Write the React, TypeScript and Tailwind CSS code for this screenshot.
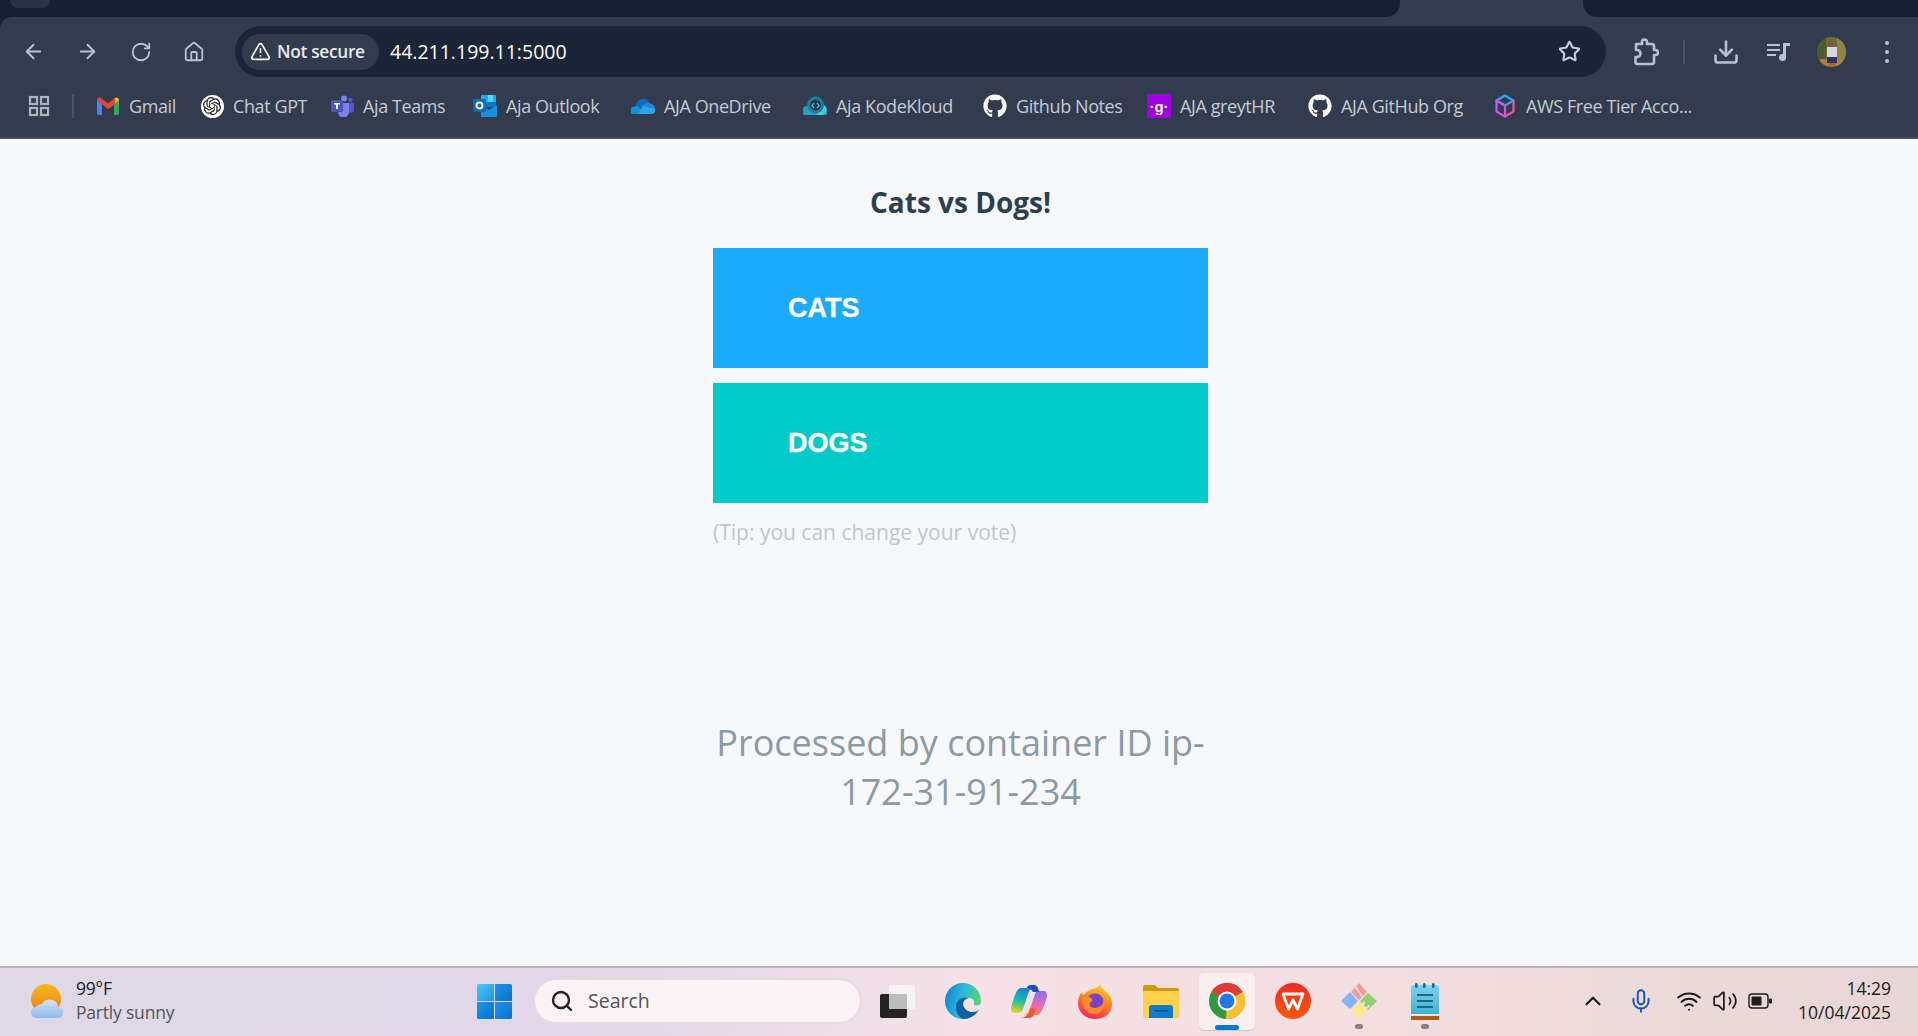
import { ArrowLeft, ArrowRight, ChevronUp, Download, Home, Mic, RotateCw, Search, Star, TriangleAlert, Volume2, Wifi } from "lucide-react";
import { FaGithub } from "react-icons/fa";
import { SiOpenai } from "react-icons/si";
import type { ReactNode } from "react";

const ui = "font-['Open_Sans','Noto_Sans',sans-serif]";

function GridIcon() {
  return (
    <svg width="22" height="22" viewBox="0 0 22 22" fill="none" stroke="#aeb4bf" strokeWidth="2.2">
      <rect x="2" y="2" width="7" height="7" />
      <rect x="13" y="2" width="7" height="7" />
      <rect x="2" y="13" width="7" height="7" />
      <rect x="13" y="13" width="7" height="7" />
    </svg>
  );
}

function GmailIcon() {
  return (
    <svg width="22" height="18" viewBox="0 0 22 18" fill="none">
      <path d="M0 3v13a2 2 0 0 0 2 2h3V7z" fill="#4285f4" />
      <path d="M22 3v13a2 2 0 0 1-2 2h-3V7z" fill="#34a853" />
      <path d="M17 1v6l5-3.5V3a2.5 2.5 0 0 0-4-2z" fill="#fbbc04" />
      <path d="M5 7 0 3.5V3a2.5 2.5 0 0 1 4-2l7 5.4L18 1v6l-7 5.2z" fill="#ea4335" />
    </svg>
  );
}

function ChatGptIcon() {
  return (
    <div className="flex h-[23px] w-[23px] items-center justify-center rounded-full bg-white">
      <SiOpenai className="text-[18px] text-[#222]" />
    </div>
  );
}

function TeamsIcon() {
  return (
    <svg width="23" height="22" viewBox="0 0 23 22">
      <circle cx="13" cy="3.500" r="3" fill="#7b83eb" />
      <circle cx="19.500" cy="5" r="2.200" fill="#5059c9" />
      <path d="M16 8h7v6a3.500 3.500 0 0 1-7 1z" fill="#5059c9" />
      <path d="M7 8h11v9a5.500 5.500 0 0 1-11 0z" fill="#7b83eb" />
      <rect x="0" y="5" width="12" height="12" rx="1.200" fill="#4b53bc" />
      <path d="M3 8h6v1.600H6.900V14H5.100V9.600H3z" fill="#fff" />
    </svg>
  );
}

function OutlookIcon() {
  return (
    <svg width="24" height="22" viewBox="0 0 24 22">
      <path d="M8 0h15v7H8z" fill="#28a8ea" />
      <path d="M15 0h5v7h-5z" fill="#50d9ff" />
      <path d="M8 7h15v5H8z" fill="#0078d4" />
      <path d="M8 11l8 4 8-5v11a1 1 0 0 1-1 1H8z" fill="#1490df" />
      <rect x="0" y="4" width="13" height="13" rx="1" fill="#0f6cbd" />
      <circle cx="6.500" cy="10.500" r="3" fill="none" stroke="#fff" strokeWidth="1.800" />
    </svg>
  );
}

function OneDriveIcon() {
  return (
    <svg width="24" height="15" viewBox="0 0 24 15">
      <path d="M5 7a7 7 0 0 1 13.500-2.500L22 8H4z" fill="#0f6cbd" />
      <path d="M3 15a3.500 3.500 0 0 1-1-7l3-1 6 2-3 6z" fill="#1490df" />
      <path d="M11 7a7 7 0 0 1 8-2.500A5 5 0 0 1 24 10l-12 1z" fill="#1c88dc" />
      <path d="M7 15h13.500a3.500 3.500 0 0 0 3.500-5L12 7z" fill="#28a8ea" />
    </svg>
  );
}

function KodeKloudIcon() {
  return (
    <svg width="24" height="20" viewBox="0 0 24 20">
      <path d="M1 19a5 5 0 0 1 3-9h16a5 5 0 0 1 3 9z" fill="#1fa3c4" />
      <path d="M18 8a5 5 0 0 1 5 6 5 5 0 0 1-4 5h-5z" fill="#42d0e0" />
      <circle cx="12.500" cy="9" r="8.500" fill="#1d7f99" />
      <circle cx="12.500" cy="9" r="5.500" fill="#123f52" />
      <path d="M11 7 9 9.500l2 2.500M14 7l2 2.500-2 2.500" fill="none" stroke="#7fd7e6" strokeWidth="1.100" />
    </svg>
  );
}

function GithubIcon() {
  return <FaGithub className="text-[24px] text-white" />;
}

function GreytIcon() {
  return (
    <div className="flex h-[24px] w-[24px] items-center justify-center bg-[#a100e0] font-['Liberation_Sans',sans-serif] text-[15px] leading-none font-bold text-white">
      ·g·
    </div>
  );
}

function AwsIcon() {
  return (
    <svg width="20" height="24" viewBox="0 0 20 24" fill="none" strokeWidth="2.2" strokeLinejoin="round">
      <path d="M10 1.500 18.500 6.500 10 11.500 1.500 6.500z" stroke="#2ea6f5" />
      <path d="M1.500 6.500v11L10 22.500v-11z" stroke="#c45bea" />
      <path d="M18.500 6.500v11L10 22.500" stroke="#f0568f" />
    </svg>
  );
}

function ExtensionIcon() {
  return (
    <svg width="26" height="28" viewBox="0 0 26 28" fill="none" stroke="#b9c1d2" strokeWidth="2.600" strokeLinejoin="round">
      <path d="M3 6h6V4a2.500 2.500 0 0 1 5 0v2h5a2 2 0 0 1 2 2v4h1.500a2.500 2.500 0 0 1 0 5H21v7a2 2 0 0 1-2 2H4.500a2 2 0 0 1-2-2v-5h1.500a3.500 3.500 0 0 0 0-7H3z" />
    </svg>
  );
}

function MediaIcon() {
  return (
    <svg width="24" height="22" viewBox="0 0 24 22" fill="#b9c1d2">
      <rect x="0" y="3" width="13" height="2" />
      <rect x="0" y="8" width="13" height="2" />
      <rect x="0" y="13" width="9" height="2" />
      <path d="M16 2h7v3h-4v11.500a3.500 3.500 0 1 1-3-3.400z" />
    </svg>
  );
}

function Avatar() {
  return (
    <svg width="29" height="30" viewBox="0 0 29 30">
      <defs>
        <clipPath id="avatarClip">
          <ellipse cx="14.500" cy="15" rx="14.500" ry="15" />
        </clipPath>
      </defs>
      <g clipPath="url(#avatarClip)">
        <rect width="29" height="30" fill="#6f6a3a" />
        <rect x="0" y="0" width="9" height="30" fill="#4e5a2c" />
        <rect x="20" y="0" width="9" height="30" fill="#8d8640" />
        <rect x="3" y="22" width="23" height="8" fill="#a8803f" />
        <circle cx="14" cy="7" r="3" fill="#7a5a45" />
        <rect x="10" y="10" width="10" height="10" fill="#d8d6de" />
        <rect x="10" y="20" width="10" height="6" fill="#2c3470" />
        <rect x="12" y="26" width="6" height="3" fill="#c45a2a" />
      </g>
    </svg>
  );
}

function WeatherIcon() {
  return (
    <svg width="32" height="34" viewBox="0 0 32 34">
      <defs>
        <linearGradient id="sun" x1="0" y1="0" x2="0" y2="1">
          <stop offset="0" stopColor="#f6b91f" />
          <stop offset="1" stopColor="#ee7a10" />
        </linearGradient>
        <linearGradient id="cloud" x1="0" y1="0" x2="0" y2="1">
          <stop offset="0" stopColor="#d4e3f7" />
          <stop offset="1" stopColor="#8fb8ec" />
        </linearGradient>
      </defs>
      <ellipse cx="15" cy="15" rx="15" ry="15" fill="url(#sun)" />
      <path d="M6 34a5.500 5.500 0 0 1-1-11 7 7 0 0 1 6-3 8 8 0 0 1 10-4 7 7 0 0 1 6 7 5.500 5.500 0 0 1 0 11z" fill="url(#cloud)" />
    </svg>
  );
}

function WindowsLogo() {
  return (
    <svg width="35" height="35" viewBox="0 0 35 35">
      <defs>
        <linearGradient id="winA" x1="0" y1="0" x2="1" y2="1">
          <stop offset="0" stopColor="#4cc9fb" />
          <stop offset="1" stopColor="#1a94e4" />
        </linearGradient>
        <linearGradient id="winB" x1="0" y1="0" x2="1" y2="1">
          <stop offset="0" stopColor="#1a94e4" />
          <stop offset="1" stopColor="#0673d0" />
        </linearGradient>
      </defs>
      <path d="M0 1.500A1.500 1.500 0 0 1 1.500 0H17v17H0z" fill="url(#winA)" />
      <path d="M18 0h15.500A1.500 1.500 0 0 1 35 1.500V17H18z" fill="url(#winB)" />
      <path d="M0 18h17v17H1.500A1.500 1.500 0 0 1 0 33.500z" fill="url(#winB)" />
      <path d="M18 18h17v15.500a1.500 1.500 0 0 1-1.500 1.500H18z" fill="url(#winB)" />
    </svg>
  );
}

function TaskViewIcon() {
  return (
    <svg width="35" height="33" viewBox="0 0 35 33">
      <rect x="0" y="9" width="27" height="24" rx="2" fill="#242424" />
      <rect x="9" y="0" width="26" height="24" rx="1.500" fill="#f5f3f3" />
      <rect x="9" y="9" width="18" height="15" rx="1" fill="#bdbcbc" />
    </svg>
  );
}

function EdgeIcon() {
  return (
    <svg width="36" height="36" viewBox="0 0 36 36">
      <defs>
        <linearGradient id="edgeA" x1="0" y1="0.300" x2="1" y2="0.500">
          <stop offset="0" stopColor="#1583d8" />
          <stop offset="0.500" stopColor="#2bbcd8" />
          <stop offset="1" stopColor="#5ad66b" />
        </linearGradient>
      </defs>
      <circle cx="18" cy="18" r="18" fill="url(#edgeA)" />
      <path d="M11 24C11 16 18 13 24 15 19 16 17 20 19 24 22 30 30 30 34 27 30 33 24 36 18 36 13 34 11 29 11 24z" fill="#0d5fa8" />
      <path d="M24 15C28 15 30 18 29 20 28 22 30 24 36 21 36 24 35 26 34 27 30 30 22 30 19 24 17 20 19 16 24 15z" fill="#f7e2e6" />
    </svg>
  );
}

function CopilotIcon() {
  return (
    <svg width="36" height="33" viewBox="0 0 36 33">
      <defs>
        <linearGradient id="copA" x1="0.400" y1="0" x2="0.200" y2="1">
          <stop offset="0" stopColor="#1b7fe0" />
          <stop offset="0.500" stopColor="#1ec0a0" />
          <stop offset="1" stopColor="#f5d020" />
        </linearGradient>
        <linearGradient id="copB" x1="0.500" y1="0" x2="0.400" y2="1">
          <stop offset="0" stopColor="#8a6df0" />
          <stop offset="0.600" stopColor="#e86bb8" />
          <stop offset="1" stopColor="#f58a4a" />
        </linearGradient>
      </defs>
      <path d="M10 3h12c-3 1-4 3-5 6l-5 15c-1 3-3 4-6 4H4c-3 0-4-2-4-5 1-5 3-11 5-15 1-3 3-5 5-5z" fill="url(#copA)" />
      <path d="M26 30H14c3-1 4-3 5-6l5-15c1-3 3-3 6-3h2c3 0 4 2 4 5-1 5-3 10-5 14-1 3-3 5-5 5z" fill="url(#copB)" />
      <path d="M16 3c0-2 2-3 4-3h3c3 0 4 2 5 7h-6c-2-3-4-4-6-4z" fill="#1752c4" />
      <path d="M10 33c3 0 5-2 7-4 1-2 1-3 2-6l6 1-2 5c-1 3-3 4-5 4z" fill="#f0573c" />
    </svg>
  );
}

function FirefoxIcon() {
  return (
    <svg width="34" height="35" viewBox="0 0 34 35">
      <defs>
        <linearGradient id="ffA" x1="0.700" y1="0" x2="0.300" y2="1">
          <stop offset="0" stopColor="#ffd31f" />
          <stop offset="0.500" stopColor="#ff7a1f" />
          <stop offset="1" stopColor="#f0245f" />
        </linearGradient>
      </defs>
      <path d="M17 35C7 35 0 28 0 19c0-4 1-8 4-11 0 2 1 3 2 3 2-3 5-5 8-6 5-1 8-3 8-5 1 3 2 4 6 8 4 3 6 7 6 12 0 9-7 15-17 15z" fill="url(#ffA)" />
      <circle cx="17" cy="18" r="8.500" fill="#7542c8" />
      <path d="M3 14c3-2 8-2 10 0 2 1 2 3 0 4-3 2-1 6 4 6 5 0 9-4 9-9 2 7-2 15-9 15-7 0-13-6-14-16z" fill="#ff8a2a" />
    </svg>
  );
}

function FolderIcon() {
  return (
    <svg width="36" height="33" viewBox="0 0 36 33">
      <path d="M0 2a2 2 0 0 1 2-2h10l3 3h19a2 2 0 0 1 2 2v3H0z" fill="#cf9a06" />
      <path d="M0 6h36v25a2 2 0 0 1-2 2H2a2 2 0 0 1-2-2z" fill="#fdd14a" />
      <path d="M6 33V23a3 3 0 0 1 3-3h18a3 3 0 0 1 3 3v10z" fill="#0f7cc8" />
      <rect x="12" y="25" width="13" height="1.600" fill="#0b4f85" />
    </svg>
  );
}

function ChromeIcon() {
  return (
    <svg width="36" height="36" viewBox="0 0 36 36">
      <circle cx="18" cy="18" r="18" fill="#2e9b43" />
      <path d="M18 18 2.400 9A18 18 0 0 1 33.600 9z" fill="#e53935" />
      <path d="M18 18 33.600 9A18 18 0 0 1 17 36z" fill="#fbc02d" />
      <circle cx="18" cy="18" r="9.500" fill="#fff" />
      <circle cx="18" cy="18" r="7.500" fill="#2a75e6" />
    </svg>
  );
}

function WpsIcon() {
  return (
    <svg width="36" height="36" viewBox="0 0 36 36">
      <defs>
        <linearGradient id="wps" x1="0" y1="0" x2="0" y2="1">
          <stop offset="0" stopColor="#ee2a1e" />
          <stop offset="1" stopColor="#ff5a0a" />
        </linearGradient>
      </defs>
      <circle cx="18" cy="18" r="18" fill="url(#wps)" />
      <path d="M8 11h20l-5.500 15-4.500-9-4.500 9z" fill="none" stroke="#fff" strokeWidth="2.800" strokeLinejoin="round" />
    </svg>
  );
}

function PaletteIcon() {
  return (
    <svg width="36" height="36" viewBox="0 0 36 36">
      <path d="M18 17 10 9l8-9 8 9z" fill="#f49a9a" />
      <path d="M19 18l8-8 9 8-9 9z" fill="#8ed36f" />
      <path d="M18 19l8 8-8 9-8-9z" fill="#fde98a" />
      <path d="M17 18l-8 8-9-8 9-9z" fill="#86b4f8" />
      <path d="M14 3l8 12M24 19a3 3 0 1 0 4 3" stroke="#f4dede" strokeWidth="1.800" fill="none" />
    </svg>
  );
}

function NotepadIcon() {
  return (
    <svg width="28" height="37" viewBox="0 0 28 37">
      <defs>
        <linearGradient id="note" x1="0" y1="0" x2="0" y2="1">
          <stop offset="0" stopColor="#7ad3ef" />
          <stop offset="1" stopColor="#3eaed0" />
        </linearGradient>
      </defs>
      <rect x="0" y="2" width="28" height="31" rx="2" fill="url(#note)" />
      <path d="M0 33h28v4H0z" fill="#b55a10" />
      <path d="M0 31h28v2H0z" fill="#e9e4df" />
      <rect x="4" y="0" width="2.500" height="5" rx="1.200" fill="#1b6b88" />
      <rect x="12" y="0" width="2.500" height="5" rx="1.200" fill="#1b6b88" />
      <rect x="21" y="0" width="2.500" height="5" rx="1.200" fill="#1b6b88" />
      <rect x="6" y="11" width="16" height="2" fill="#1b6b88" />
      <rect x="6" y="17" width="16" height="2" fill="#1b6b88" />
      <rect x="6" y="23" width="16" height="2" fill="#1b6b88" />
    </svg>
  );
}

function BatteryIcon() {
  return (
    <svg width="24" height="16" viewBox="0 0 24 16" fill="none">
      <rect x="1" y="1" width="19" height="14" rx="3" stroke="#1c1c1c" strokeWidth="1.400" />
      <rect x="3.500" y="3.500" width="10" height="9" rx="1" fill="#1c1c1c" />
      <rect x="21" y="5.500" width="3" height="5" rx="1" fill="#1c1c1c" />
    </svg>
  );
}

const bookmarks: { label: string; icon: ReactNode; width: string }[] = [
  { label: "Gmail", icon: <GmailIcon />, width: "w-[104px]" },
  { label: "Chat GPT", icon: <ChatGptIcon />, width: "w-[130px]" },
  { label: "Aja Teams", icon: <TeamsIcon />, width: "w-[143px]" },
  { label: "Aja Outlook", icon: <OutlookIcon />, width: "w-[158px]" },
  { label: "AJA OneDrive", icon: <OneDriveIcon />, width: "w-[172px]" },
  { label: "Aja KodeKloud", icon: <KodeKloudIcon />, width: "w-[180px]" },
  { label: "Github Notes", icon: <GithubIcon />, width: "w-[164px]" },
  { label: "AJA greytHR", icon: <GreytIcon />, width: "w-[161px]" },
  { label: "AJA GitHub Org", icon: <GithubIcon />, width: "w-[185px]" },
  { label: "AWS Free Tier Acco...", icon: <AwsIcon />, width: "w-[200px]" },
];

function TabStrip() {
  return (
    <div className="flex h-[17px] bg-[#333c4e]">
      <div className="flex-1 rounded-br-[14px] bg-[#172033] pl-[10px]">
        <div className="h-[8px] w-[40px] rounded-b-[10px] bg-[#2a3346]" />
      </div>
      <div className="w-[183px]" />
      <div className="w-[335px] rounded-bl-[14px] bg-[#172033]" />
    </div>
  );
}

function Toolbar() {
  return (
    <div className="bg-[#172033]">
      <div className="flex h-[60px] items-start rounded-tl-[12px] bg-[#333c4e] pt-[9px] pr-[20px] pl-[22px]">
        <div className="flex h-[51px] items-center gap-[31px] text-[#b9c1d2]">
          <ArrowLeft size={23} strokeWidth={2} />
          <ArrowRight size={23} strokeWidth={2} />
          <RotateCw size={22} strokeWidth={2} />
          <Home size={22} strokeWidth={2} />
        </div>
        <div className="ml-[30px] flex h-[51px] w-[1371px] items-center rounded-full bg-[#1c2538] pr-[14px] pl-[7px]">
          <div className="flex h-[36px] w-[137px] items-center gap-[6px] rounded-full bg-[#333c4e] pl-[8px]">
            <TriangleAlert size={21} strokeWidth={1.8} className="text-white" />
            <span className="text-[17.300px] font-semibold tracking-[-0.3px] whitespace-nowrap text-[#e6e9ef]">Not secure</span>
          </div>
          <span className="ml-[11px] text-[19.500px] text-white">44.211.199.11:5000</span>
          <Star size={23} strokeWidth={2.2} className="mr-[11px] ml-auto text-[#c8cedb]" />
        </div>
        <div className="flex h-[51px] flex-1 items-center pl-[27px] text-[#b9c1d2]">
          <ExtensionIcon />
          <div className="mx-[24px] h-[24px] w-[2px] bg-[#4c5568]" />
          <div className="ml-[3px]">
            <Download size={28} strokeWidth={2.2} />
          </div>
          <div className="ml-[27px]">
            <MediaIcon />
          </div>
          <div className="ml-[26px]">
            <Avatar />
          </div>
          <div className="mr-[9px] ml-auto flex flex-col gap-[5px]">
            <span className="h-[4px] w-[4px] rounded-full bg-[#b9c1d2]" />
            <span className="h-[4px] w-[4px] rounded-full bg-[#b9c1d2]" />
            <span className="h-[4px] w-[4px] rounded-full bg-[#b9c1d2]" />
          </div>
        </div>
      </div>
    </div>
  );
}

function BookmarksBar() {
  return (
    <div className="flex h-[62px] items-center border-b-2 border-[#454d5d] bg-[#333c4e] pb-[2px] pl-[28px]">
      <GridIcon />
      <div className="mx-[22px] h-[24px] w-[2px] bg-[#4c5568]" />
      <div className="flex items-center">
        {bookmarks.map((b) => (
          <div key={b.label} className={`flex shrink-0 items-center gap-[9px] ${b.width}`}>
            <div className="flex w-[24px] items-center justify-center">{b.icon}</div>
            <span className="text-[18px] tracking-[-0.4px] whitespace-nowrap text-[#c5cad5]">{b.label}</span>
          </div>
        ))}
      </div>
    </div>
  );
}

function VotePage() {
  return (
    <main className="flex flex-1 flex-col items-center bg-[#f7f8fa] pt-[45px] pl-[3px]">
      <h1 className="text-[28px] leading-[36px] font-bold text-[#2c3e50]">Cats vs Dogs!</h1>
      <div className="mt-[28px] flex w-[495px] flex-col gap-[15px] font-['Liberation_Sans',sans-serif] text-[27px] font-bold text-white [-webkit-text-stroke:0.3px_white]">
        <button className="flex h-[120px] items-center bg-[#1aabfb] pl-[75px]">CATS</button>
        <button className="flex h-[120px] items-center bg-[#00cbca] pl-[75px]">DOGS</button>
      </div>
      <p className="mt-[15px] w-[495px] text-[21px] leading-[28px] text-[#bec6cd]">(Tip: you can change your vote)</p>
      <p className="mt-[172px] w-[495px] text-center text-[36px] leading-[49px] text-[#8b9aa5]">
        Processed by container ID ip-172-31-91-234
      </p>
    </main>
  );
}

function TaskbarApp({ children, active, running }: { children: ReactNode; active?: boolean; running?: boolean }) {
  return (
    <div className="relative flex h-[57px] w-[66px] items-center justify-center">
      {active && <div className="absolute inset-y-0 left-[5px] w-[56px] rounded-[5px] bg-[#faeeee] shadow-[0_1px_1px_#d8c4c8]" />}
      <div className="relative">{children}</div>
      {active && <div className="absolute bottom-0 h-[5px] w-[24px] rounded-full bg-[#0078d4]" />}
      {running && <div className="absolute bottom-[1px] h-[5px] w-[8px] rounded-full bg-[#8a7f82]" />}
    </div>
  );
}

function Taskbar() {
  return (
    <footer className="flex h-[70px] items-center border-t-2 border-[#bcb4bc] bg-[linear-gradient(90deg,#dfd8e6_0%,#e0d8e8_30%,#f5e1e7_50%,#f3dfe0_70%,#e8d5d6_100%)] pb-[2px] text-[#1c1c1c]">
      <div className="flex w-[477px] items-center pl-[31px]">
        <WeatherIcon />
        <div className="ml-[13px] text-[17.500px] leading-[24px] tracking-[-0.2px]">
          <div className="-mt-[2px]">99°F</div>
          <div className="text-[#555]">Partly sunny</div>
        </div>
      </div>
      <WindowsLogo />
      <div className="ml-[21px] flex h-[46px] w-[329px] items-center rounded-full border-2 border-[#ead9de] bg-[#fbf3f5] pl-[15px]">
        <Search size={24} strokeWidth={2.4} className="text-[#222]" />
        <span className="ml-[14px] text-[19.500px] text-[#555]">Search</span>
      </div>
      <div className="ml-[2px] flex items-center">
        <TaskbarApp><TaskViewIcon /></TaskbarApp>
        <TaskbarApp><EdgeIcon /></TaskbarApp>
        <TaskbarApp><CopilotIcon /></TaskbarApp>
        <TaskbarApp><FirefoxIcon /></TaskbarApp>
        <TaskbarApp><FolderIcon /></TaskbarApp>
        <TaskbarApp active><ChromeIcon /></TaskbarApp>
        <TaskbarApp><WpsIcon /></TaskbarApp>
        <TaskbarApp running><PaletteIcon /></TaskbarApp>
        <TaskbarApp running><NotepadIcon /></TaskbarApp>
      </div>
      <div className="ml-auto flex items-center pr-[27px]">
        <ChevronUp size={26} strokeWidth={2} />
        <Mic size={26} strokeWidth={1.8} className="ml-[22px] text-[#1259b8]" />
        <Wifi size={26} strokeWidth={1.8} className="ml-[22px]" />
        <Volume2 size={26} strokeWidth={1.6} className="ml-[10px]" />
        <div className="ml-[10px]"><BatteryIcon /></div>
        <div className="ml-[26px] text-right text-[17.500px] leading-[24px]">
          <div className="-mt-[2px]">14:29</div>
          <div>10/04/2025</div>
        </div>
      </div>
    </footer>
  );
}

export default function App() {
  return (
    <div className={`flex h-screen w-full flex-col overflow-hidden ${ui}`}>
      <TabStrip />
      <Toolbar />
      <BookmarksBar />
      <VotePage />
      <Taskbar />
    </div>
  );
}
